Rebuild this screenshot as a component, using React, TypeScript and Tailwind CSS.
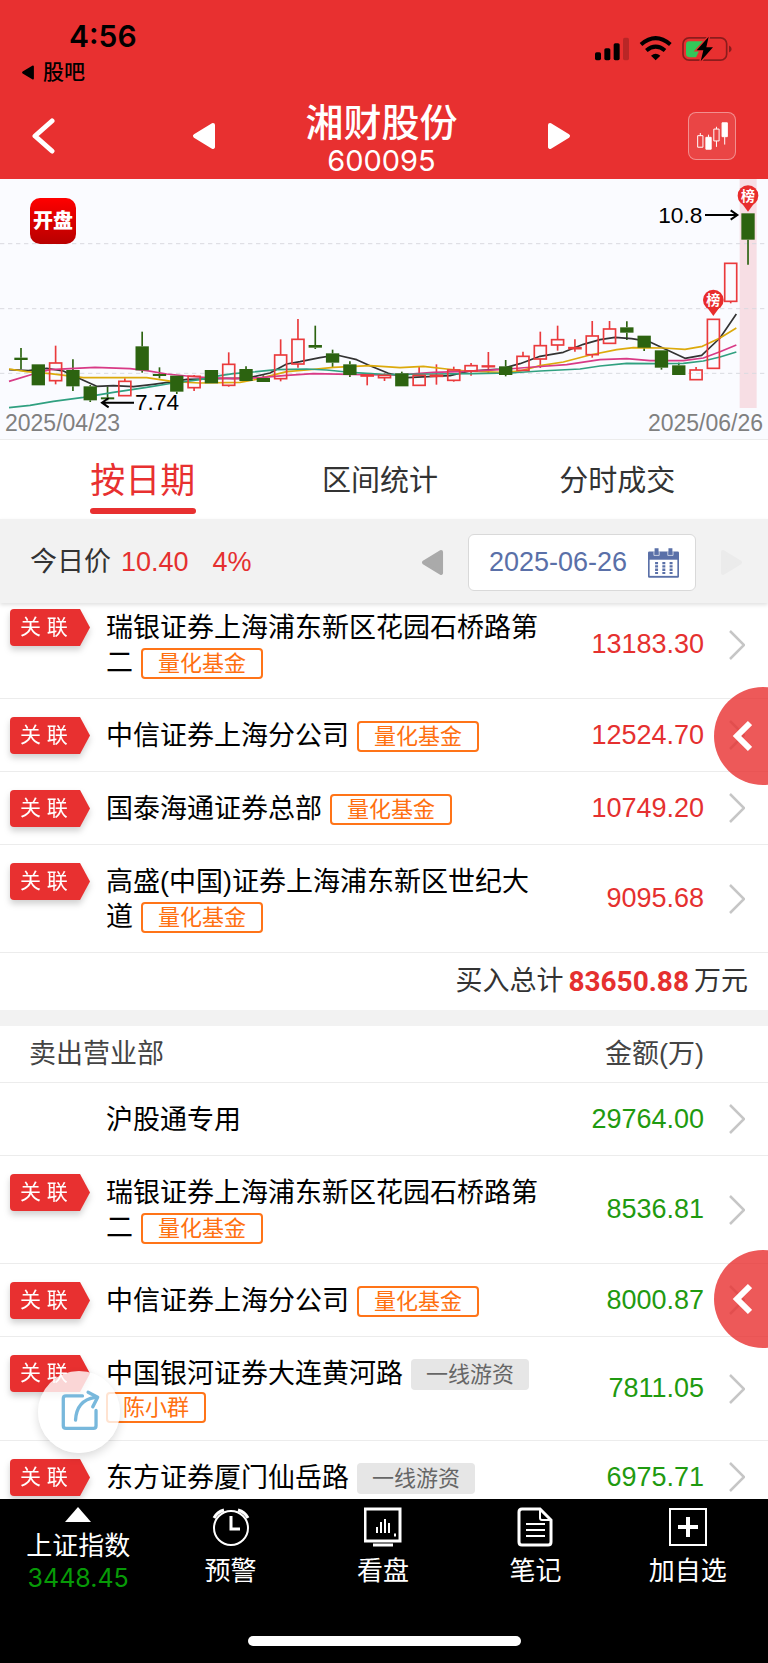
import { useState } from "react";

type Tag = { text: string; kind: "fund" | "plain" };

type Seat = {
  name: string;
  amount: string;
  linked?: boolean;
  tag?: Tag;
  below?: Tag;
};

const fund: Tag = { text: "量化基金", kind: "fund" };
const hotMoney: Tag = { text: "一线游资", kind: "plain" };

const buySeats: Seat[] = [
  { name: "瑞银证券上海浦东新区花园石桥路第二", amount: "13183.30", linked: true, tag: fund },
  { name: "中信证券上海分公司", amount: "12524.70", linked: true, tag: fund },
  { name: "国泰海通证券总部", amount: "10749.20", linked: true, tag: fund },
  { name: "高盛(中国)证券上海浦东新区世纪大道", amount: "9095.68", linked: true, tag: fund },
];

const sellSeats: Seat[] = [
  { name: "沪股通专用", amount: "29764.00" },
  { name: "瑞银证券上海浦东新区花园石桥路第二", amount: "8536.81", linked: true, tag: fund },
  { name: "中信证券上海分公司", amount: "8000.87", linked: true, tag: fund },
  {
    name: "中国银河证券大连黄河路",
    amount: "7811.05",
    linked: true,
    tag: hotMoney,
    below: { text: "陈小群", kind: "fund" },
  },
  { name: "东方证券厦门仙岳路", amount: "6975.71", linked: true, tag: hotMoney },
];

// [direction, body top, body bottom, wick top, wick bottom]
type Candle = ["up" | "down", number, number, number, number];

const candles: Candle[] = [
  ["down", 536, 543, 507, 571],
  ["down", 556, 619, 556, 619],
  ["up", 552, 605, 500, 616],
  ["down", 573, 622, 541, 636],
  ["down", 622, 664, 618, 669],
  ["down", 655, 661, 622, 664],
  ["up", 607, 650, 598, 650],
  ["down", 502, 574, 458, 581],
  ["down", 585, 591, 565, 598],
  ["down", 590, 638, 590, 645],
  ["up", 592, 626, 588, 636],
  ["down", 573, 613, 573, 613],
  ["up", 556, 619, 520, 623],
  ["down", 570, 606, 562, 606],
  ["down", 597, 609, 589, 609],
  ["up", 528, 599, 481, 607],
  ["up", 481, 555, 420, 566],
  ["down", 498, 506, 440, 510],
  ["down", 523, 551, 512, 565],
  ["down", 556, 588, 547, 594],
  ["up", 588, 591, 588, 619],
  ["up", 589, 596, 583, 606],
  ["down", 583, 622, 578, 622],
  ["up", 589, 619, 561, 619],
  ["up", 589, 592, 556, 617],
  ["up", 573, 604, 563, 608],
  ["up", 560, 576, 552, 590],
  ["up", 561, 563, 519, 583],
  ["down", 562, 588, 543, 592],
  ["up", 532, 574, 518, 576],
  ["up", 500, 540, 458, 567],
  ["up", 482, 498, 440, 515],
  ["up", 506, 509, 481, 518],
  ["up", 471, 527, 426, 536],
  ["up", 450, 493, 426, 493],
  ["down", 445, 461, 427, 483],
  ["down", 470, 506, 470, 516],
  ["down", 514, 566, 514, 572],
  ["down", 559, 588, 551, 588],
  ["up", 573, 602, 564, 602],
  ["up", 421, 568, 421, 568],
  ["up", 253, 367, 253, 373],
  ["down", 103, 182, 103, 257],
];

const averages = [
  {
    color: "#333333",
    points:
      "27,572 85,575 140,568 190,576 250,604 290,622 340,620 400,623 460,616 520,608 560,601 620,600 680,598 740,598 810,582 860,555 900,548 960,536 1010,528 1070,542 1110,560 1165,583 1220,596 1300,592 1350,590 1410,576 1500,570 1560,554 1620,532 1690,520 1750,496 1800,482 1845,475 1895,479 1945,487 2000,512 2055,538 2105,529 2160,477 2209,405",
  },
  {
    color: "#dcaa0c",
    points:
      "27,570 80,578 150,584 250,596 440,596 520,608 600,612 720,610 760,603 860,578 920,573 1000,565 1110,560 1200,566 1270,562 1340,570 1400,576 1500,580 1560,576 1620,560 1690,549 1770,528 1850,512 1900,506 1990,507 2055,511 2107,502 2160,477 2209,447",
  },
  {
    color: "#d83a86",
    points:
      "27,607 100,585 150,572 285,565 390,569 440,575 500,585 560,591 620,596 700,599 780,596 860,589 940,584 1050,586 1150,588 1220,586 1300,580 1400,577 1500,572 1600,564 1700,557 1800,542 1880,539 1950,545 2050,545 2110,537 2160,518 2209,498",
  },
  {
    color: "#30a080",
    points:
      "27,686 90,679 160,667 250,655 340,640 440,625 520,612 600,602 660,590 700,584 760,579 830,572 920,570 980,573 1040,579 1100,583 1160,587 1300,585 1420,584 1530,582 1620,576 1740,570 1800,561 1880,553 1960,554 2050,553 2110,546 2160,534 2209,519",
  },
];

function StatusIcons() {
  return (
    <svg viewBox="630 105 420 80" className="h-[27px] w-[140px]" aria-hidden="true">
      <rect x="633" y="156" width="18" height="24" rx="5" />
      <rect x="661" y="144" width="18" height="36" rx="5" />
      <rect x="689" y="129" width="18" height="51" rx="5" />
      <rect x="717" y="113" width="18" height="67" rx="5" opacity="0.2" />
      <g fill="none" stroke="#000">
        <path d="M771 133 Q815 95 859 133" strokeWidth="12" />
        <path d="M787 151 Q815 128 843 151" strokeWidth="12" />
      </g>
      <path d="M801 167 Q815 155 829 167 L815 180 Z" />
      <rect x="897" y="113" width="131" height="67" rx="18" fill="none" stroke="#000" strokeOpacity="0.4" strokeWidth="5" />
      <path d="M1035 136 Q1043 139 1043 146.500 Q1043 154 1035 157 Z" opacity="0.4" />
      <path d="M916 123 H960 L936 171 H916 Q906 171 906 161 V133 Q906 123 916 123 Z" fill="#34c759" />
      <path
        d="M974 110 L938 150 H958 L950 183 L987 141 H967 Z"
        stroke="#e83030"
        strokeWidth="8"
        paintOrder="stroke"
      />
    </svg>
  );
}

function SolidTriangle({ className, flip }: { className: string; flip?: boolean }) {
  return (
    <svg viewBox="0 0 24 28" className={className} fill="currentColor" stroke="currentColor" strokeLinejoin="round" strokeWidth="4" aria-hidden="true">
      <path d={flip ? "M3 3 L21 14 L3 25 Z" : "M21 3 L3 14 L21 25 Z"} />
    </svg>
  );
}

function CandleIcon() {
  return (
    <svg viewBox="0 0 94 84" className="h-7 w-[31px]" fill="none" stroke="#fff" strokeWidth="3" aria-hidden="true">
      <path d="M10 33 v8 M2 41 h16 v35 h-16 z" />
      <path d="M35 38 v8 M27 46 h16 v36 h-16 z" fill="#fff" />
      <path d="M59 14 v7 M59 57 v18 M51 21 h16 v36 h-16 z" />
      <path d="M84 44 v24 M76 2 h16 v42 h-16 z" fill="#fff" />
    </svg>
  );
}

function Pin({ x, y }: { x: number; y: number }) {
  return (
    <g>
      <circle cx={x} cy={y} r="31" fill="#e82c2c" />
      <path d={`M${x - 19} ${y + 22} L${x} ${y + 48} L${x + 19} ${y + 22} Z`} fill="#e82c2c" />
      <text x={x} y={y + 15} fontSize="42" fontWeight="700" fill="#fff" textAnchor="middle">
        榜
      </text>
    </g>
  );
}

function PriceChart() {
  return (
    <svg viewBox="0 0 2304 687" className="block h-auto w-full overflow-visible" aria-label="日K线">
      <rect x="2219" y="0" width="51" height="687" fill="#f7dee4" />
      {[194, 389, 583].map((y) => (
        <line key={y} x1="0" x2="2304" y1={y} y2={y} stroke="#d9dae0" strokeWidth="3" strokeDasharray="13 11" />
      ))}
      {candles.map(([dir, top, bottom, high, low], i) => {
        const x = 63 + i * 51.93;
        const color = dir === "up" ? "#ea3a3c" : "#2c6310";
        return (
          <g key={i} stroke={color} strokeWidth="5">
            {high < top && <line x1={x} x2={x} y1={high} y2={top} />}
            {low > bottom && <line x1={x} x2={x} y1={bottom} y2={low} />}
          </g>
        );
      })}
      {averages.map((line) => (
        <polyline key={line.color} points={line.points} fill="none" stroke={line.color} strokeWidth="5" strokeLinejoin="round" />
      ))}
      {candles.map(([dir, top, bottom], i) => {
        const x = 63 + i * 51.93;
        return dir === "up" ? (
          <rect key={i} x={x - 18} y={top} width="36" height={bottom - top} fill="none" stroke="#ea3a3c" strokeWidth="5" />
        ) : (
          <rect key={i} x={x - 20} y={top} width="40" height={bottom - top} fill="#2c6310" />
        );
      })}
      <g fill="none" stroke="#000" strokeWidth="6">
        <path d="M402 671 H307 M326 657 L306 671 L326 685" />
        <path d="M2115 108 H2211 M2192 94 L2212 108 L2192 122" />
      </g>
      <g fontSize="68" fill="#000">
        <text x="405" y="692">7.74</text>
        <text x="2107" y="131" textAnchor="end">
          10.8
        </text>
      </g>
      <Pin x={2244} y={50} />
      <Pin x={2140} y={363} />
    </svg>
  );
}

function TagLabel({ tag }: { tag: Tag }) {
  return (
    <span
      className={`inline-flex h-[31px] items-center whitespace-nowrap rounded-[4px] px-[15px] align-middle text-[22px] leading-none ${
        tag.kind === "fund" ? "border-2 border-[#ff7418] text-[#ff7010]" : "bg-[#e6e6e6] text-[#666]"
      }`}
    >
      {tag.text}
    </span>
  );
}

function SeatRow({ seat, color }: { seat: Seat; color: string }) {
  return (
    <tr className="border-b border-[#ececec]">
      <td className="pl-[10px] pt-[18px] align-top">
        {seat.linked && (
          <div className="w-20 drop-shadow-[0_4px_3px_rgba(0,0,0,0.18)]">
            <div className="h-[37px] rounded-l-[4px] bg-[#e83030] pl-[10px] text-[21px] leading-[36px] text-white [clip-path:polygon(0_0,70px_0,100%_50%,70px_100%,0_100%)]">
              关 联
            </div>
          </div>
        )}
      </td>
      <td className="pb-[17px] pr-[43px] pt-5 align-top text-[27px] leading-[35px] text-black">
        <div>
          {seat.name}
          {seat.tag && (
            <span className="ml-2 inline-flex h-[35px] items-center align-top">
              <TagLabel tag={seat.tag} />
            </span>
          )}
        </div>
        {seat.below && (
          <div className="flex h-[31px]">
            <TagLabel tag={seat.below} />
          </div>
        )}
      </td>
      <td className={`text-right text-[27px] ${color}`}>{seat.amount}</td>
      <td className="pl-[25px]">
        <svg viewBox="0 0 16 30" className="h-[30px] w-4" fill="none" stroke="#c6c6c6" strokeWidth="2.500" aria-hidden="true">
          <path d="M1 1 L15 15 L1 29" />
        </svg>
      </td>
    </tr>
  );
}

function SeatColumns() {
  return (
    <colgroup>
      <col className="w-[106px]" />
      <col />
      <col className="w-[114px]" />
      <col className="w-16" />
    </colgroup>
  );
}

function SideHandle({ className }: { className: string }) {
  return (
    <button
      type="button"
      aria-label="展开"
      className={`absolute -right-11 flex size-[98px] items-center rounded-full bg-[#e83030]/80 pl-[18px] ${className}`}
    >
      <svg viewBox="0 0 20 32" className="h-8 w-5" fill="none" stroke="#fff" strokeWidth="6" aria-hidden="true">
        <path d="M18 3 L5 16 L18 29" />
      </svg>
    </button>
  );
}

const footerLinks = [
  {
    label: "预警",
    icon: (
      <>
        <circle cx="19" cy="21" r="17" />
        <path d="M19 9 V22 H28" strokeWidth="3" />
        <path d="M2 11 Q5 5 12 3 M36 11 Q33 5 26 3" strokeWidth="3" />
      </>
    ),
  },
  {
    label: "看盘",
    icon: (
      <>
        <path d="M1 2 H36 V34 H1 Z M9 38 H29" strokeWidth="3" />
        <path d="M13 20 V26 M17 15 V26 M21 12 V26 M25 16 V26" />
        <path d="M30 28 H32" strokeWidth="3" />
      </>
    ),
  },
  {
    label: "笔记",
    icon: (
      <>
        <path d="M24 2 H6 Q3 2 3 5 V35 Q3 38 6 38 H32 Q35 38 35 35 V13 Z" strokeWidth="3" />
        <path d="M24 3 V11 Q24 13 26 13 H34 M10 17 H29 M10 23 H29 M10 29 H29" />
      </>
    ),
  },
  {
    label: "加自选",
    icon: (
      <>
        <path d="M1 2 H37 V38 H1 Z" />
        <path d="M9 20 H29 M19 10 V30" strokeWidth="4" />
      </>
    ),
  },
];

const tabs = ["按日期", "区间统计", "分时成交"];

export default function App() {
  const [activeTab, setActiveTab] = useState<string>("按日期");

  return (
    <div className="flex h-screen flex-col overflow-hidden bg-white font-['Liberation_Sans','Noto_Sans_CJK_SC',sans-serif]">
      <header className="bg-[#e83030]">
        <div className="flex items-start justify-between pl-[21px] pr-[34px] pt-4">
          <div>
            <div className="pl-12 font-['Inter',sans-serif] text-[30px] font-semibold leading-10">4:56</div>
            <a href="#" className="flex items-center gap-2 text-[21px] font-medium leading-8">
              <SolidTriangle className="h-[15px] w-[14px]" />
              股吧
            </a>
          </div>
          <div className="pt-[19px]">
            <StatusIcons />
          </div>
        </div>
        <div className="flex items-center justify-between px-8 pb-[3px] pt-2 text-white">
          <button type="button" aria-label="返回" className="flex w-[160px]">
            <svg viewBox="0 0 24 36" className="h-9 w-6" fill="none" stroke="currentColor" strokeWidth="5" strokeLinecap="round" strokeLinejoin="round" aria-hidden="true">
              <path d="M20 3 L3 18 L20 33" />
            </svg>
          </button>
          <button type="button" aria-label="上一只">
            <SolidTriangle className="h-7 w-6" />
          </button>
          <div className="flex-1 pt-[5px] text-center">
            <h1 className="text-[38px] font-medium leading-[44px]">湘财股份</h1>
            <div className="font-['Inter',sans-serif] text-[29px] leading-[31px]">600095</div>
          </div>
          <button type="button" aria-label="下一只">
            <SolidTriangle className="h-7 w-6" flip />
          </button>
          <div className="flex w-[165px] justify-end">
            <button
              type="button"
              aria-label="K线"
              className="flex size-12 items-center justify-center rounded-lg border border-white/40 bg-white/10"
            >
              <CandleIcon />
            </button>
          </div>
        </div>
      </header>

      <section className="relative border-b border-[#ececec] bg-[#fafbff]">
        <PriceChart />
        <div className="flex justify-between px-[5px] text-[23px] leading-[31px] text-[#808080]">
          <span>2025/04/23</span>
          <span>2025/06/26</span>
        </div>
        <button
          type="button"
          className="absolute left-[30px] top-[19px] size-[46px] rounded-[10px] bg-linear-to-b from-[#ff0000] to-[#b80000] text-[20px] font-black leading-none text-white"
        >
          开盘
        </button>
      </section>

      <nav className="grid grid-cols-3 pl-6 pr-8 pt-[14px]">
        {tabs.map((tab) => (
          <button
            key={tab}
            type="button"
            onClick={() => setActiveTab(tab)}
            className={`flex h-[65px] flex-col items-center ${
              tab === activeTab ? "text-[35px] text-[#e83030]" : "text-[29px] text-[#333]"
            }`}
          >
            <span className="leading-[54px]">{tab}</span>
            {tab === activeTab && <span className="h-[6px] w-[106px] rounded-full bg-[#e83030]" />}
          </button>
        ))}
      </nav>

      <div className="relative z-10 flex items-center bg-[#f2f2f2] pb-3 pl-[30px] pr-[25px] pt-[15px] text-[27px] shadow-[0_2px_4px_rgba(0,0,0,0.12)]">
        <span className="text-[#333]">今日价</span>
        <span className="ml-[10px] text-[#e5302f]">10.40</span>
        <span className="ml-6 text-[#e5302f]">4%</span>
        <button type="button" aria-label="前一天" className="ml-auto text-[#aaa]">
          <SolidTriangle className="h-[27px] w-[23px]" />
        </button>
        <button
          type="button"
          className="ml-6 flex h-[57px] w-[228px] items-center justify-between rounded-[6px] border border-[#d9d9d9] bg-white pl-5 pr-4 text-[#5a70a8]"
        >
          2025-06-26
          <svg viewBox="0 0 94 90" className="h-[30px] w-[31px]" fill="currentColor" aria-hidden="true">
            <path d="M4 10 H20 V0 H32 V10 H62 V0 H74 V10 H90 Q94 10 94 14 V86 Q94 90 90 90 H4 Q0 90 0 86 V14 Q0 10 4 10 Z" />
            <rect x="5" y="35" width="84" height="49" fill="#fff" />
            <path d="M18 10 V22 H34 V10 M60 10 V22 H76 V10" fill="none" stroke="#fff" strokeWidth="2" />
            <path
              d="M26 42 V78 M48 42 V78 M70 42 V78"
              stroke="currentColor"
              strokeWidth="9"
              strokeDasharray="7 3"
            />
          </svg>
        </button>
        <button type="button" aria-label="后一天" className="ml-6 text-[#ebebeb]">
          <SolidTriangle className="h-[27px] w-[23px]" flip />
        </button>
      </div>

      <main className="relative min-h-0 flex-1 overflow-hidden">
        <div className="h-full overflow-y-auto [scrollbar-width:none]">
          <table className="-mt-3 w-full table-fixed border-collapse">
            <SeatColumns />
            <tbody>
              {buySeats.map((seat) => (
                <SeatRow key={seat.name} seat={seat} color="text-[#e5302f]" />
              ))}
            </tbody>
          </table>
          <div className="flex items-center justify-end pr-5 text-[27px] leading-[57px] text-[#333]">
            买入总计
            <strong className="mx-[5px] font-['Roboto',sans-serif] text-[28px] font-bold text-[#e5302f]">83650.88</strong>
            万元
          </div>
          <div className="h-4 bg-[#f2f2f2]" />
          <table className="w-full table-fixed border-collapse">
            <SeatColumns />
            <thead>
              <tr className="border-b border-[#ececec] text-[27px] leading-[56px] text-[#444]">
                <th colSpan={2} className="pl-[29px] text-left font-normal">
                  卖出营业部
                </th>
                <th className="whitespace-nowrap text-right font-normal">金额(万)</th>
                <th />
              </tr>
            </thead>
            <tbody>
              {sellSeats.map((seat) => (
                <SeatRow key={seat.name} seat={seat} color="text-[#1f9a10]" />
              ))}
            </tbody>
          </table>
        </div>
        <SideHandle className="top-[84px]" />
        <SideHandle className="top-[647px]" />
        <button
          type="button"
          aria-label="分享"
          className="absolute bottom-[46px] left-[38px] flex size-[82px] items-center justify-center rounded-full bg-white/80 shadow-[0_4px_10px_rgba(0,0,0,0.14)]"
        >
          <svg viewBox="175 150 125 130" className="h-[43px] w-[42px] overflow-visible" fill="none" stroke="#78b8dc" strokeWidth="10" strokeLinecap="round" strokeLinejoin="round" aria-hidden="true">
            <path d="M248 165 H198 Q190 165 190 173 V255 Q190 263 198 263 H281 Q289 263 289 255 V209" />
            <path d="M227 238 Q230 178 286 169 M265 154 L294 169 L279 198" />
          </svg>
        </button>
      </main>

      <footer className="bg-black pb-[17px] text-white">
        <div className="grid grid-cols-5 pl-0.5 pr-1 text-[26px]">
          <button type="button" className="flex flex-col items-center pt-2">
            <svg viewBox="0 0 26 15" className="h-[15px] w-[26px]" fill="currentColor" aria-hidden="true">
              <path d="M13 0 L26 15 H0 Z" />
            </svg>
            <span className="pt-2 leading-8">上证指数</span>
            <span className="font-['Inter',sans-serif] text-[25px] leading-8 text-[#079a07]">3448.45</span>
          </button>
          {footerLinks.map((item) => (
            <a key={item.label} href="#" className="flex flex-col items-center pt-2">
              <svg viewBox="0 0 38 40" className="h-10 w-[38px]" fill="none" stroke="currentColor" strokeWidth="2" aria-hidden="true">
                {item.icon}
              </svg>
              <span className="pt-2 leading-8">{item.label}</span>
            </a>
          ))}
        </div>
        <div className="mx-auto mt-[42px] h-[10px] w-[273px] rounded-full bg-white" />
      </footer>
    </div>
  );
}
